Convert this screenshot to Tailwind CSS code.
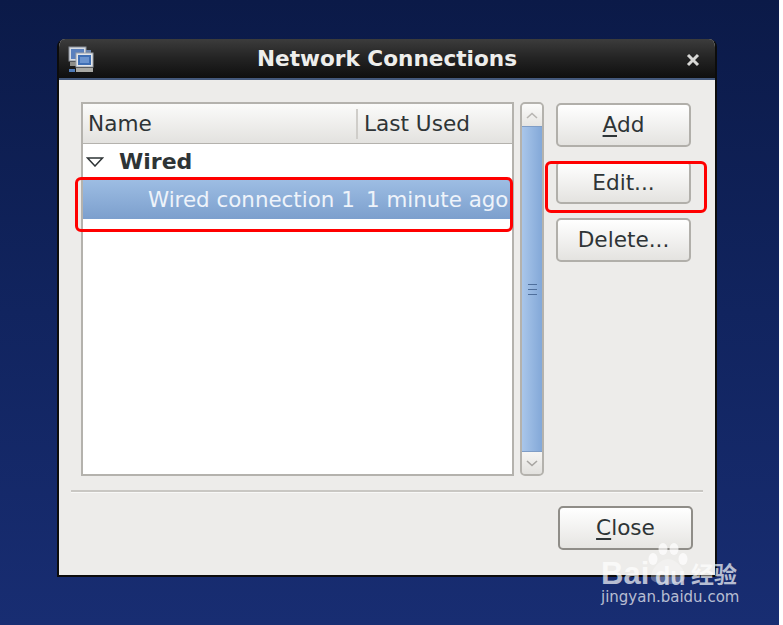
<!DOCTYPE html>
<html lang="en">
<head>
<meta charset="UTF-8" />
<title>Network Connections</title>
<script src="https://cdn.jsdelivr.net/npm/@tailwindcss/browser@4"></script>
</head>
<body class="bg-white">
<div class="relative w-[779px] h-[625px] overflow-hidden bg-gradient-to-b from-[#0b1a48] via-[#11245f] to-[#182d72] pt-[39px] pl-[57px] font-['DejaVu_Sans',sans-serif]">

  <!-- window -->
  <div class="w-[660px] h-[538px] flex flex-col rounded-t-[8px] border-x-2 border-b-2 border-[#0c0c0c] bg-[#edecea] overflow-hidden">
    <!-- title bar -->
    <div class="relative h-[41px] shrink-0 flex items-center justify-center bg-gradient-to-b from-[#3c3c3c] via-[#232323] to-[#0f0f0f] border-b-2 border-[#44597c]">
      <svg class="absolute left-[8px] top-[7px]" width="28" height="28" viewBox="0 0 28 28">
        <rect x="2" y="1" width="17" height="14" fill="#d6dbe2" stroke="#8a9099" stroke-width="1"/>
        <rect x="4" y="3" width="13" height="10" fill="#5a80bd"/>
        <rect x="3" y="16" width="15" height="4" fill="#8d8d88"/>
        <rect x="19" y="4" width="5" height="6" fill="#6a84ad"/>
        <rect x="9" y="7" width="17" height="14" fill="#e3e6ea" stroke="#9aa0a8" stroke-width="1"/>
        <rect x="11" y="9" width="13" height="10" fill="#3f6fb5"/>
        <rect x="13" y="11" width="9" height="6" fill="#6b94cf"/>
        <rect x="9" y="22" width="17" height="4" fill="#a9a9a4"/>
        <rect x="2" y="23" width="6" height="3" fill="#4f7bb8"/>
      </svg>
      <span class="text-[21.6px] font-bold text-[#eeeeec] leading-none mt-[1px]">Network Connections</span>
      <svg class="absolute right-[15px] top-[14px]" width="14" height="14" viewBox="0 0 14 14">
        <path d="M2 2 L12 12 M12 2 L2 12" stroke="#d8d8d6" stroke-width="3"/>
      </svg>
    </div>

    <!-- content -->
    <div class="flex-1 flex flex-col pt-[22px] px-[12px]">
      <div class="flex pl-[10px] pr-[12px] h-[374px]">
        <!-- tree -->
        <div class="w-[433px] shrink-0 flex flex-col border-2 border-[#b4b2ad] bg-white">
          <div class="h-[40px] shrink-0 flex items-center bg-gradient-to-b from-[#fbfbfa] to-[#e3e2df] border-b border-[#b4b2ad] text-[21.6px] text-[#2e3436]">
            <div class="w-[273px] pl-[5px] leading-none">Name</div>
            <div class="h-[30px] border-l-2 border-[#cfcdc9] pl-[6px] flex items-center leading-none">Last Used</div>
          </div>
          <div class="h-[36px] flex items-center gap-[15px] pl-[3px] text-[#2e3436]">
            <svg width="18" height="10" viewBox="0 0 18 10"><path d="M1.5 1 H16.5 L9 9 Z" fill="none" stroke="#2e3436" stroke-width="1.5"/></svg>
            <span class="text-[22px] font-bold leading-none">Wired</span>
          </div>
          <div class="h-[39px] flex items-center bg-gradient-to-b from-[#9dbde3] to-[#7c9fcd] text-[21.4px] text-[#eef3fa] whitespace-nowrap">
            <span class="pl-[65px] w-[283px] shrink-0 leading-none">Wired connection 1</span>
            <span class="leading-none">1 minute ago</span>
          </div>
        </div>

        <!-- scrollbar -->
        <div class="ml-[6px] w-[24px] shrink-0 flex flex-col rounded-[5px] border-2 border-[#b4b2ad] bg-[#d8d6d2] overflow-hidden">
          <div class="h-[22px] shrink-0 flex items-center justify-center bg-gradient-to-b from-[#fbfbfa] to-[#e6e5e2]">
            <svg width="12" height="7" viewBox="0 0 12 7"><path d="M1 6 L6 1.5 L11 6" fill="none" stroke="#b8b6b2" stroke-width="1.6"/></svg>
          </div>
          <div class="flex-1 flex items-center justify-center bg-gradient-to-r from-[#a9c6ea] to-[#83a8d8] border-y border-[#7f9dc6]">
            <div class="flex flex-col gap-[4px] w-[9px]">
              <div class="h-px bg-[#4f6f9c]"></div>
              <div class="h-px bg-[#4f6f9c]"></div>
              <div class="h-px bg-[#4f6f9c]"></div>
            </div>
          </div>
          <div class="h-[22px] shrink-0 flex items-center justify-center bg-gradient-to-b from-[#f6f5f3] to-[#e2e1de]">
            <svg width="12" height="7" viewBox="0 0 12 7"><path d="M1 1 L6 5.5 L11 1" fill="none" stroke="#a8a6a2" stroke-width="1.6"/></svg>
          </div>
        </div>

        <!-- side buttons -->
        <div class="ml-[12px] w-[135px] shrink-0 flex flex-col gap-[14px] pt-[1px]">
          <button class="h-[44px] rounded-[5px] border-2 border-[#b1afaa] bg-gradient-to-b from-white to-[#e4e3e0] text-[21.6px] text-[#2e3436] leading-none"><span class="underline underline-offset-[3px]">A</span>dd</button>
          <button class="h-[43px] rounded-[5px] border-2 border-[#b1afaa] bg-gradient-to-b from-white to-[#e4e3e0] text-[21.6px] text-[#2e3436] leading-none">Edit...</button>
          <button class="h-[44px] rounded-[5px] border-2 border-[#b1afaa] bg-gradient-to-b from-white to-[#e4e3e0] text-[21.6px] text-[#2e3436] leading-none">Delete...</button>
        </div>
      </div>

      <!-- separator -->
      <div class="mt-[14px] border-t-2 border-[#c9c7c3] border-b border-b-[#f8f8f7] h-[3px]"></div>

      <div class="flex justify-end pr-[10px] pt-[13px]">
        <button class="w-[135px] h-[44px] rounded-[5px] border-2 border-[#8f8d88] bg-gradient-to-b from-white to-[#e6e5e2] text-[21.6px] text-[#2e3436] leading-none"><span class="underline underline-offset-[3px]">C</span>lose</button>
      </div>
    </div>
  </div>

  <!-- red annotations -->
  <div class="absolute left-[75px] top-[177px] w-[438px] h-[55px] border-[3px] border-[#ff0000] rounded-[6px]"></div>
  <div class="absolute left-[545px] top-[161px] w-[162px] h-[52px] border-[3px] border-[#ff0000] rounded-[6px]"></div>

  <!-- watermark -->
  <div class="absolute left-[600px] top-[540px] w-[145px] h-[70px] text-white/70">
    <svg class="absolute left-[47px] top-[2px]" width="42" height="46" viewBox="0 0 42 46" fill="#ffffff" fill-opacity="0.7">
      <ellipse cx="6" cy="17" rx="4.5" ry="6"/>
      <ellipse cx="16" cy="7" rx="4.5" ry="6"/>
      <ellipse cx="27" cy="7" rx="4.5" ry="6"/>
      <ellipse cx="36" cy="17" rx="4.5" ry="6"/>
      <path d="M21 17 C13 17 3 28 4 36 C5 44 37 44 38 36 C39 28 29 17 21 17 Z" fill-opacity="0.28"/>
    </svg>
    <div class="absolute left-[1px] top-[19px] text-[31px] font-bold leading-[30px] font-['Liberation_Sans',sans-serif]">Bai</div>
    <div class="absolute left-[55px] top-[24px] text-[25px] font-bold leading-none font-['Liberation_Sans',sans-serif]">du</div>
    <div class="absolute left-[91px] top-[22px] text-[23px] font-bold leading-none font-['Noto_Sans_CJK_SC',sans-serif]">经验</div>
    <div class="absolute left-[1px] top-[50px] text-[15px] leading-none whitespace-nowrap">jingyan.baidu.com</div>
  </div>
</div>
</body>
</html>
